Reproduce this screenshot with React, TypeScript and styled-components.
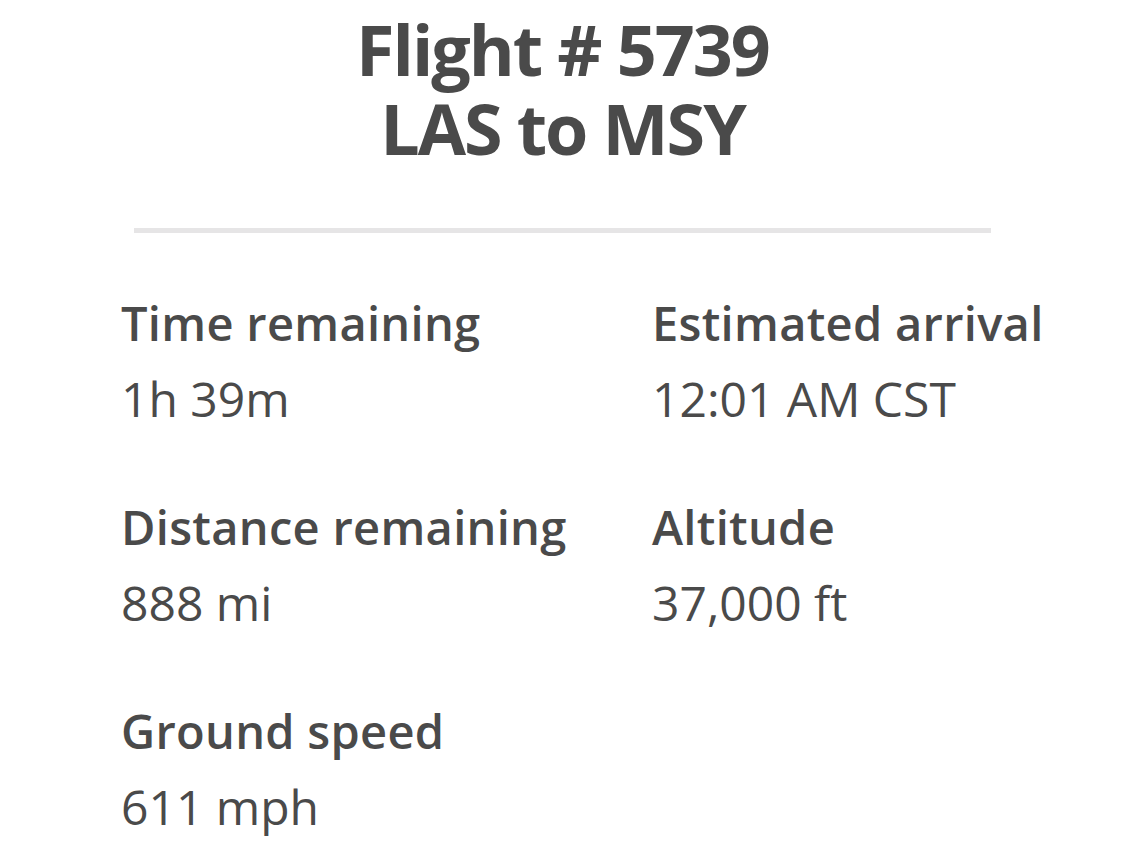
import React from "react";
import styled, { createGlobalStyle } from "styled-components";

const GlobalStyle = createGlobalStyle`
  html, body {
    margin: 0;
    padding: 0;
    background: #ffffff;
  }
  body {
    font-family: "Open Sans", "Noto Sans", sans-serif;
    color: #4a4a4a;
  }
`;

const Page = styled.main`
  width: 1125px;
  min-height: 846px;
  box-sizing: border-box;
  padding-top: 10px;
  display: flex;
  flex-direction: column;
  align-items: center;
`;

const Title = styled.h1`
  margin: 0;
  display: flex;
  flex-direction: column;
  align-items: center;
  font-size: 70px;
  line-height: 79px;
  letter-spacing: -2px;
  font-weight: 700;
  color: #4a4a4a;
`;

const TitleLine = styled.span`
  display: block;
  white-space: nowrap;
`;

const Divider = styled.hr`
  width: 857px;
  height: 5px;
  margin: 60px 0 0 0;
  border: none;
  background: #e6e5e6;
`;

const Stats = styled.dl`
  align-self: stretch;
  margin: 53px 0 0 0;
  padding-left: 121px;
  display: grid;
  grid-template-columns: 531px 1fr;
  row-gap: 54px;
`;

const Stat = styled.div`
  display: flex;
  flex-direction: column;
`;

const Label = styled.dt`
  margin: 0;
  font-size: 47px;
  line-height: 75px;
  font-weight: 600;
  letter-spacing: 0.3px;
  white-space: nowrap;
`;

const Value = styled.dd`
  margin: 0;
  font-size: 48px;
  line-height: 75px;
  font-weight: 400;
  white-space: nowrap;
`;

const stats = [
  { label: "Time remaining", value: "1h 39m" },
  { label: "Estimated arrival", value: "12:01 AM CST" },
  { label: "Distance remaining", value: "888 mi" },
  { label: "Altitude", value: "37,000 ft" },
  { label: "Ground speed", value: "611 mph" },
];

export default function App() {
  return (
    <>
      <GlobalStyle />
      <Page>
        <Title>
          <TitleLine>Flight # 5739</TitleLine>
          <TitleLine>LAS to MSY</TitleLine>
        </Title>
        <Divider />
        <Stats>
          {stats.map((s) => (
            <Stat key={s.label}>
              <Label>{s.label}</Label>
              <Value>{s.value}</Value>
            </Stat>
          ))}
        </Stats>
      </Page>
    </>
  );
}
